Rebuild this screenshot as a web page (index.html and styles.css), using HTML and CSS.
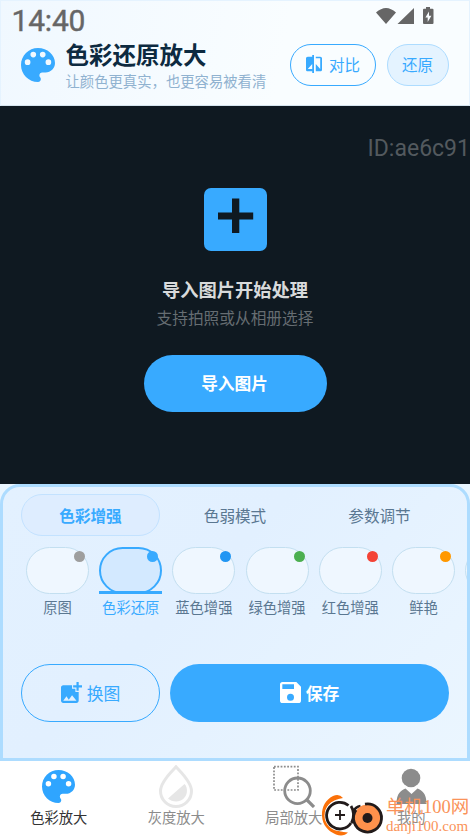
FILE: index.html
```html
<!DOCTYPE html>
<html lang="zh-CN">
<head>
<meta charset="utf-8">
<meta name="viewport" content="width=device-width, initial-scale=1">
<title>色彩还原放大</title>
<link rel="stylesheet" href="styles.css">
</head>
<body>
<svg class="defs" width="0" height="0">
  <symbol id="palette" viewBox="3 3 18 18"><path d="M12 3c-4.97 0-9 4.03-9 9s4.03 9 9 9c.83 0 1.5-.67 1.5-1.5 0-.39-.15-.74-.39-1.01-.23-.26-.38-.61-.38-.99 0-.83.67-1.5 1.5-1.5H16c2.76 0 5-2.24 5-5 0-4.42-4.03-8-9-8zm-5.5 9a1.5 1.5 0 1 1 0-3 1.5 1.5 0 0 1 0 3zm3-4a1.5 1.5 0 1 1 0-3 1.5 1.5 0 0 1 0 3zm5 0a1.5 1.5 0 1 1 0-3 1.5 1.5 0 0 1 0 3zm3 4a1.5 1.5 0 1 1 0-3 1.5 1.5 0 0 1 0 3z"/></symbol>
</svg>
<div class="app">
  <header class="header">
    <div class="status">
      <span class="clock">14:40</span>
      <svg class="signals" width="60" height="20" viewBox="0 0 60 20">
        <path d="M0 5.5Q10 -3.5 20 5.5L10 17zM21.5 17 38 1V17z"/>
        <path fill-rule="evenodd" d="M50 0h4v1.700h2.500q1 0 1 1V16q0 1-1 1H48q-1 0-1-1V2.700q0-1 1-1h2zM53 4.500l-3.600 6h2.300V15l3.700-6.300H53z"/>
      </svg>
    </div>
    <div class="titlebar">
      <svg class="logo"><use href="#palette"/></svg>
      <div class="titles">
        <h1>色彩还原放大</h1>
        <p>让颜色更真实，也更容易被看清</p>
      </div>
      <button class="pill compare">
        <svg width="16" height="18" viewBox="3 1 18 22" preserveAspectRatio="none"><path d="M10 3H5c-1.100 0-2 .9-2 2v14c0 1.100.9 2 2 2h5v2h2V1h-2v2zm0 15H5l5-6v6zm9-15h-5v2h5v13l-5-6v9h5c1.100 0 2-.9 2-2V5c0-1.100-.9-2-2-2z"/></svg>
        <span>对比</span>
      </button>
      <button class="pill reset">还原</button>
    </div>
  </header>

  <main class="stage">
    <span class="device-id">ID:ae6c91</span>
    <svg class="plus" width="63" height="63" viewBox="0 0 63 63"><rect width="63" height="63" rx="7" fill="#38aaff"/><path d="M28 10.500h7.300V24.500H49.200V31.500H35.300V45H28V31.500H14V24.500H28z" fill="#0f1921"/></svg>
    <h2>导入图片开始处理</h2>
    <p>支持拍照或从相册选择</p>
    <button class="import">导入图片</button>
  </main>

  <section class="panel">
    <div class="tabs">
      <span class="tab active">色彩增强</span>
      <span class="tab">色弱模式</span>
      <span class="tab">参数调节</span>
    </div>
    <div class="filters">
      <div class="filter"><i class="chip"><b class="dot gray"></b></i><span>原图</span></div>
      <div class="filter selected"><i class="chip"><b class="dot sky"></b></i><span>色彩还原</span></div>
      <div class="filter"><i class="chip"><b class="dot blue"></b></i><span>蓝色增强</span></div>
      <div class="filter"><i class="chip"><b class="dot green"></b></i><span>绿色增强</span></div>
      <div class="filter"><i class="chip"><b class="dot red"></b></i><span>红色增强</span></div>
      <div class="filter"><i class="chip"><b class="dot orange"></b></i><span>鲜艳</span></div>
      <div class="filter"><i class="chip"></i></div>
    </div>
    <div class="actions">
      <button class="swap">
        <svg width="21" height="21" viewBox="3 2 19 19"><path d="M19 7v3h-2V7h-3V5h3V2h2v3h3v2zm-3 4V8h-3V5H5c-1.100 0-2 .9-2 2v12c0 1.100.9 2 2 2h12c1.100 0 2-.9 2-2v-8zM5 19l3-4 2 3 3-4 4 5z"/></svg>
        <span>换图</span>
      </button>
      <button class="save">
        <svg width="21" height="21" viewBox="3 3 18 18"><path d="M17 3H5c-1.100 0-2 .9-2 2v14c0 1.100.9 2 2 2h14c1.100 0 2-.9 2-2V7zm-5 16a3 3 0 1 1 0-6 3 3 0 0 1 0 6zm3-10H5V5h10z"/></svg>
        <span>保存</span>
      </button>
    </div>
  </section>

  <nav class="nav">
    <a class="item current"><svg class="nav-palette"><use href="#palette"/></svg><span>色彩放大</span></a>
    <a class="item">
      <svg width="36" height="43" viewBox="0 0 36 43"><path d="M18 1.800C14.500 5.800 2.500 16.500 2.500 26a15.500 15.500 0 0 0 31 0C33.500 16.500 21.500 5.800 18 1.800z" fill="none" stroke="#e6e6e6" stroke-width="3"/><path d="M10 33.500 26.500 19q3 2.500 2.300 8.500c-.6 5-5.500 9-10.500 9-3.500 0-6-1-8.300-3z" fill="#e6e6e6"/></svg>
      <span>灰度放大</span>
    </a>
    <a class="item">
      <svg class="line" width="42" height="43" viewBox="0 0 42 43" stroke="#8c8c8c"><path d="M1 1.700H25V25H1z" stroke-width="1.700" stroke-dasharray="1.800 1.500"/><circle cx="24.500" cy="25.800" r="12.800" stroke-width="2.800"/><path d="M34 35 41 42" stroke-width="3.200"/></svg>
      <span>局部放大</span>
    </a>
    <a class="item">
      <svg width="32" height="43" viewBox="0 0 32 43"><circle cx="16" cy="13" r="9.300"/><path d="M1.500 39C1.500 28 6 25.500 10.500 23.500L16.500 29l6-5.500C27 25.500 31.500 28 31.500 39z"/></svg>
      <span>我的</span>
    </a>
  </nav>

  <div class="watermark">
    <svg class="line" width="64" height="43" viewBox="0 0 64 43">
      <path d="M22 4Q18-1 12 2C4 6 .5 14 1 22c.5 9 6 15 14 18.500 5 2 9 1 12-2-12-.5-21-6-22.500-16C3.500 14 8 6 22 4z" fill="#fb7109"/>
      <circle cx="19" cy="21.500" r="15.500" fill="#fff"/>
      <path d="M27.500 11.500A13.300 13.300 0 1 0 30 29" stroke="#211a1a" stroke-width="2.800"/>
      <path d="M30 12q5 8 .5 17M32.500 17q2-4 7-5" stroke="#211a1a" stroke-width="2.800"/>
      <path d="M19 16v10M14 21h10" stroke="#211a1a" stroke-width="1.800"/>
      <circle cx="46.500" cy="24" r="13.500" fill="#fe914c"/>
      <path d="M44 10.200A14 14 0 1 1 35 16" stroke="#211a1a" stroke-width="2.800"/>
      <circle cx="46.500" cy="24" r="5" fill="#211a1a"/>
    </svg>
    <div class="brand"><strong>单机100网</strong><span>danji100.com</span></div>
  </div>
</div>
</body>
</html>
```
FILE: styles.css
```css
* { box-sizing: border-box; margin: 0; padding: 0; }
body {
  width: 470px;
  height: 836px;
  overflow: hidden;
  font-family: Roboto, "Noto Sans CJK SC", sans-serif;
}
button { font: inherit; border: 0; background: none; display: flex; align-items: center; justify-content: center; }
svg { display: block; flex: none; fill: currentColor; }
svg.line { fill: none; }
.defs { position: absolute; }
.app { position: relative; width: 470px; height: 836px; display: grid; grid-template-rows: 106px 378px 277px 75px; overflow: hidden; background: #e9f5ff; }

.header { background: linear-gradient(100deg, #f0f8ff, #f9fdff 60%); border: 1px solid #e5f3ff; border-bottom-color: #d5e4ee; padding: 0 20px; }
.status { height: 40px; display: flex; justify-content: space-between; color: #666; padding: 4px 13px 0 0; }
.clock { margin-left: -9.500px; font-size: 30px; line-height: 32px; letter-spacing: -.2px; -webkit-text-stroke: .4px #666; }
.signals { margin: 1.500px 0 0; }
.titlebar { display: flex; height: 48px; }
.logo { width: 34px; height: 34px; margin-top: 6.500px; color: #38aaff; }
.titles { width: 225px; margin-left: 10.500px; white-space: nowrap; }
.titles h1 { font-size: 23.500px; line-height: 30px; font-weight: 700; color: #0d2a40; }
.titles p { font-size: 14.350px; line-height: 20px; color: #90b2d0; margin-top: 2px; }
.pill { height: 42px; margin-top: 2.500px; padding-bottom: 1px; border: 1.500px solid #38aaff; border-radius: 21px; color: #38aaff; font-size: 15.500px; }
.compare { width: 86px; gap: 7px; margin-left: -.5px; flex: none; }
.reset { width: 62px; margin-left: 10.500px; background: #e4f3ff; border-color: #addcff; flex: none; }

.stage { position: relative; background: #0f1921; display: flex; flex-direction: column; align-items: center; padding-top: 82px; }
.device-id { position: absolute; left: 367.500px; top: 28.500px; color: #53595e; font-size: 23px; line-height: 27px; white-space: nowrap; }
.stage h2 { margin-top: 25.500px; color: #d8dadb; font-size: 18.300px; line-height: 28px; font-weight: 700; }
.stage p { margin-top: 2.500px; color: #666d72; font-size: 15.700px; line-height: 24px; }
.import { width: 183px; height: 57px; margin-top: 24px; padding: 0 1px 1px 0; border-radius: 29px; background: #38aaff; color: #fff; font-size: 16.700px; font-weight: 700; }

.panel { background: linear-gradient(135deg, #e3f1ff, #e2f0ff 40%, #ebf6ff); border: 3px solid #addcff; border-radius: 20px 20px 0 0; padding: 7px 18px 0; overflow: hidden; }
.tabs { display: grid; grid-template-columns: 139px 139px 139px; gap: 5.500px; height: 42px; }
.tab { display: flex; align-items: center; justify-content: center; border-radius: 21px; color: #5a7791; font-size: 15.600px; padding-bottom: 1px; }
.active { border: 1px solid #c3e2ff; background: #deedff; color: #38aaff; font-weight: 700; }
.filters { display: flex; gap: 10.200px; margin: 10.500px -18px 0 5px; height: 74px; overflow: hidden; }
.filter { width: 63px; flex: none; display: flex; flex-direction: column; align-items: center; color: #5a7791; white-space: nowrap; font-size: 14.300px; }
.chip { position: relative; display: block; width: 63px; height: 47px; border: 1px solid #c3dff0; border-radius: 24px; background: #eff7ff; }
.filter span { line-height: 22px; margin-top: 3.500px; }
.dot { position: absolute; right: 3px; top: 3px; width: 11px; height: 11px; border-radius: 50%; }
.gray { background: #9e9e9e; }
.sky { background: #38aaff; }
.blue { background: #2196f3; }
.green { background: #4caf50; }
.red { background: #f44336; }
.orange { background: #ff9800; }
.selected { color: #38aaff; }
.selected .chip { background: #d3e9ff; border: 2.500px solid #38aaff; }
.selected .chip::after { content: ""; position: absolute; left: -2px; right: -2px; bottom: -2px; height: 3px; background: #38aaff; }
.selected .dot { right: 2px; top: 2px; }
.actions { display: flex; gap: 10px; margin-top: 43.500px; }
.actions button { height: 58px; border-radius: 29px; font-size: 16.800px; padding-bottom: 1px; }
.actions .swap { width: 139px; gap: 5px; border: 1.500px solid #38aaff; color: #38aaff; }
.actions .save { width: 279px; gap: 5px; background: #38aaff; color: #fff; font-weight: 700; }

.nav { background: #fff; display: grid; grid-template-columns: repeat(4, 117.500px); }
.item { display: flex; flex-direction: column; align-items: center; color: #8c8c8c; font-size: 14.300px; padding-top: 4px; }
.item span { line-height: 20px; }
.current { color: #333; }
.nav-palette { width: 33px; height: 35px; margin: 4px 0; color: #2fa5ff; }

.watermark { position: absolute; left: 321px; top: 794px; display: flex; }
.brand { margin: 3px 0 0 1px; display: flex; flex-direction: column; color: #fa9359; font-family: "Liberation Serif", "Noto Sans CJK SC", serif; white-space: nowrap; }
.brand strong { font-weight: 400; font-size: 18.500px; line-height: 21px; }
.brand span { font-size: 15px; line-height: 16px; }
```
